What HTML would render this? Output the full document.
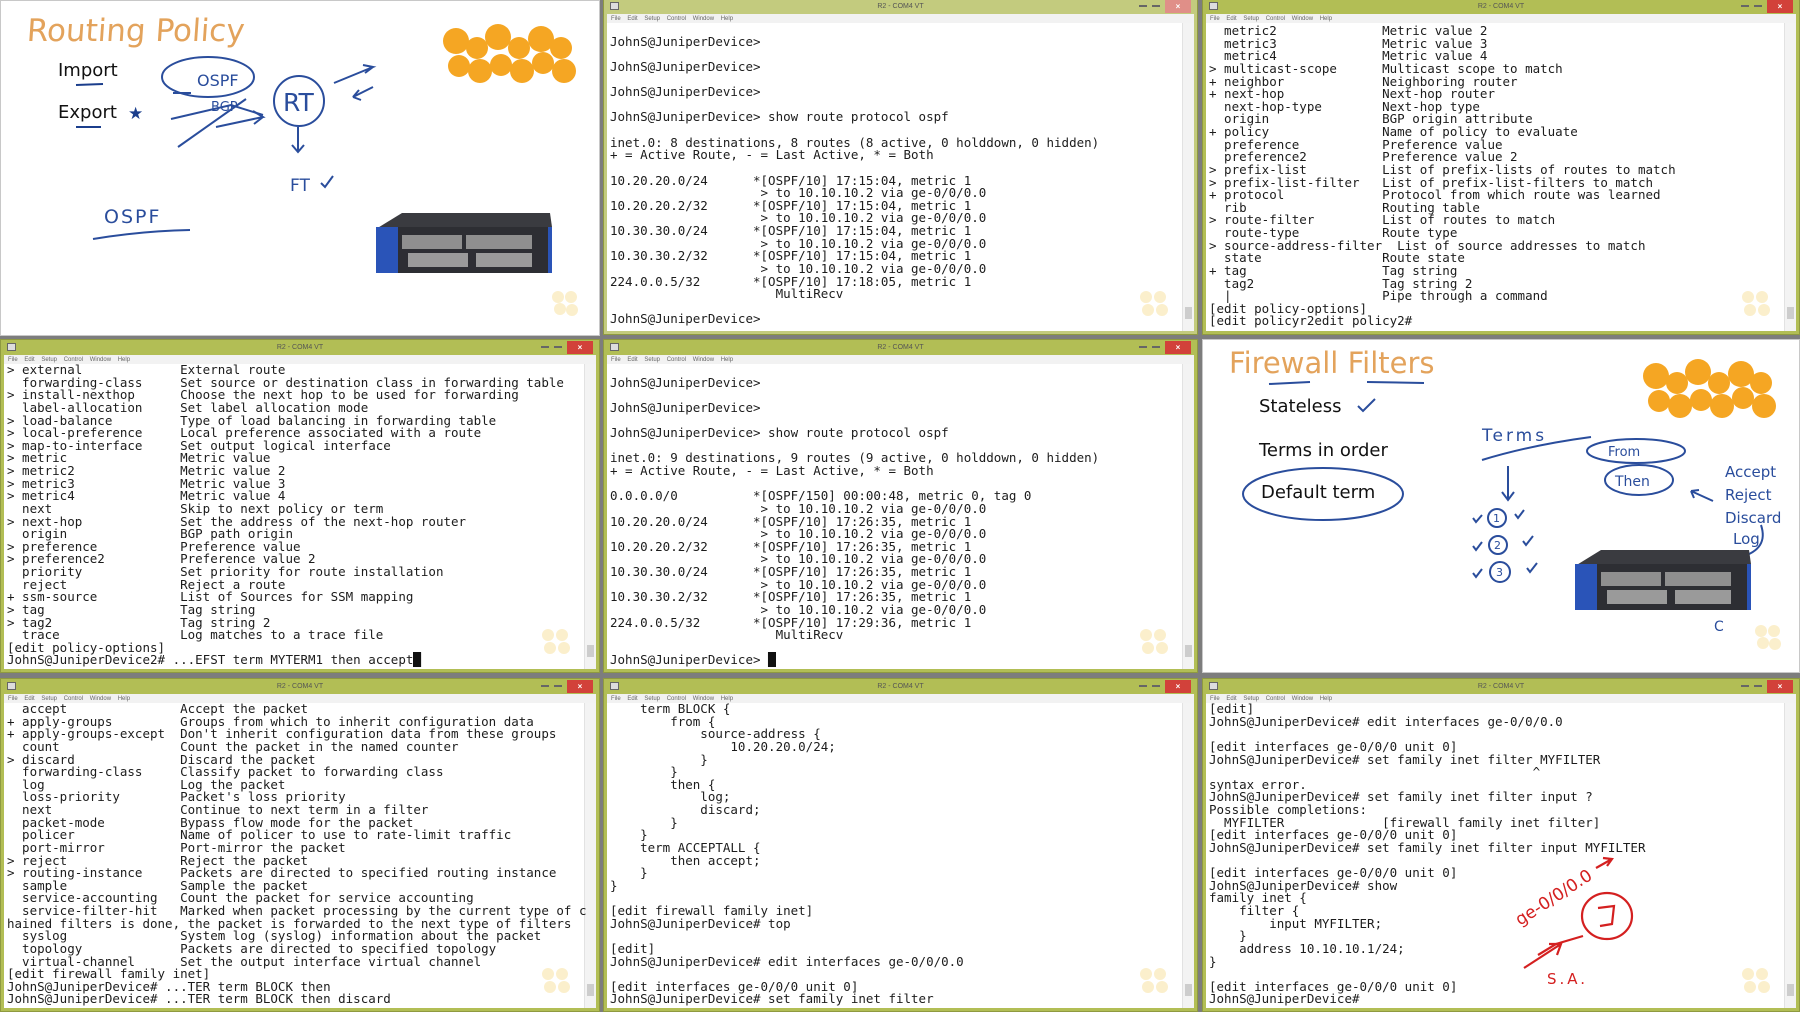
<!DOCTYPE html>
<html><head><meta charset="utf-8"><style>
*{margin:0;padding:0;box-sizing:border-box}
body{width:1800px;height:1011px;position:relative;background:#7d7d7d;overflow:hidden;font-family:"Liberation Sans",sans-serif}
.win{position:absolute;background:#b2be55;border:1px solid #8f9a40}
.win.ina{background:#c3cb7e}
.tb{position:absolute;left:0;right:0;top:0;height:15px;text-align:center;font:7px/15px "Liberation Sans",sans-serif;color:#555}
.ico{position:absolute;left:6px;top:3px;width:9px;height:8px;border:1px solid #666;background:#ddd}
.btns{position:absolute;right:6px;top:1px;height:12px}
.btns i{display:inline-block;width:8px;height:2px;background:#666;margin:5px 5px 0 0;vertical-align:top}
.btns b{display:inline-block;width:26px;height:13px;background:#d2413a;vertical-align:top;color:#fff;font:bold 8px/13px sans-serif;text-align:center}
.ina .btns b{background:#e08f88}
.menu{position:absolute;left:3px;right:3px;top:15px;height:10px;background:#f2f2f2;font:6px/10px "Liberation Sans",sans-serif;color:#666;padding-left:4px;word-spacing:5px}
.bd{position:absolute;left:3px;right:3px;top:24px;bottom:3px;background:#fff;overflow:hidden}
.sb{position:absolute;right:0;top:0;bottom:0;width:12px;background:#f3f3f3;border-left:1px solid #e2e2e2}
.sb:after{content:"";position:absolute;right:2px;bottom:12px;width:7px;height:12px;background:#cdcdcd}
pre{position:absolute;left:3px;top:0;font:12.5px/12.63px "DejaVu Sans Mono","Liberation Mono",monospace;color:#1c1c1c;white-space:pre}
.wm{position:absolute;right:24px;bottom:14px;width:30px;height:26px}
.wm span{position:absolute;width:12px;height:12px;border-radius:50%;background:#fbefcc}
.draw{position:absolute;background:#fff;border:1px solid #c8c8c8}
.cur{background:#111;color:#111}
</style></head><body>

<!-- Row1 Col1 drawing -->
<div class="draw" style="left:0;top:0;width:600px;height:336px">
<svg width="600" height="336" style="position:absolute;left:0;top:0" font-family="DejaVu Sans, sans-serif">
<text x="28" y="40" font-size="31" fill="#e3a35c" transform="skewX(-4)">Routing Policy</text>
<text x="57" y="75" font-size="18" fill="#111">Import</text>
<line x1="75" y1="84" x2="102" y2="83" stroke="#1b3e8c" stroke-width="2"/>
<text x="57" y="117" font-size="18" fill="#111">Export</text>
<line x1="75" y1="126" x2="100" y2="126" stroke="#1b3e8c" stroke-width="2"/>
<text x="127" y="118" font-size="17" fill="#1b3e8c">★</text>
<g fill="none" stroke="#2a4d9c" stroke-width="2">
<ellipse cx="207" cy="76" rx="46" ry="20"/>
<line x1="172" y1="92" x2="190" y2="92"/>
<path d="M170 118 L230 104 L262 114"/>
<path d="M177 146 L245 98"/>
<path d="M215 126 L262 116 L252 110 M262 116 L253 123"/>
<circle cx="298" cy="100" r="25"/>
<path d="M333 82 L372 66 L362 64 M372 66 L364 72"/>
<path d="M372 86 L352 96 L358 89 M352 96 L360 99"/>
<path d="M297 126 L297 150 M291 144 L297 151 L303 144"/>
<path d="M320 182 L324 186 L332 175"/>
<path d="M92 238 Q140 230 189 229"/>
</g>
<text x="196" y="85" font-size="16" fill="#2a4d9c">OSPF</text>
<text x="210" y="110" font-size="13" fill="#2a4d9c">BGP</text>
<text x="282" y="110" font-size="25" fill="#2a4d9c">RT</text>
<text x="289" y="190" font-size="17" fill="#2a4d9c">FT</text>
<text x="103" y="222" font-size="19" fill="#2a4d9c" letter-spacing="2">OSPF</text>
<g fill="#f5a623">
<circle cx="455" cy="40" r="13"/><circle cx="476" cy="47" r="11"/><circle cx="497" cy="36" r="13"/><circle cx="518" cy="47" r="11"/><circle cx="540" cy="38" r="13"/><circle cx="560" cy="47" r="11"/>
<circle cx="458" cy="65" r="11"/><circle cx="479" cy="70" r="12"/><circle cx="500" cy="64" r="11"/><circle cx="521" cy="70" r="12"/><circle cx="542" cy="62" r="11"/><circle cx="563" cy="70" r="12"/>
</g>
<g fill="#fbefcc"><circle cx="557" cy="296" r="6"/><circle cx="570" cy="296" r="6"/><circle cx="559" cy="308" r="6"/><circle cx="571" cy="309" r="6"/></g>
<g transform="translate(371,212)">
<path d="M4 16 L30 0 L178 0 L180 14 Z" fill="#3a3b40"/>
<rect x="4" y="14" width="176" height="46" fill="#2d2e33"/>
<rect x="4" y="14" width="22" height="46" fill="#2a54b8"/>
<rect x="30" y="22" width="60" height="14" fill="#8f8f8f"/><rect x="94" y="22" width="66" height="14" fill="#8f8f8f"/>
<rect x="36" y="40" width="60" height="14" fill="#9a9a9a"/><rect x="104" y="40" width="56" height="14" fill="#9a9a9a"/>
<rect x="176" y="14" width="4" height="46" fill="#2a54b8"/>
</g>
</svg>
</div>

<!-- Row1 Col2 -->
<div class="win ina" style="left:603px;top:-2px;width:595px;height:337px">
<div class="tb"><div class="ico"></div>R2 - COM4 VT<div class="btns"><i></i><i></i><b>×</b></div></div>
<div class="menu">File Edit Setup Control Window Help</div>
<div class="bd"><div class="sb"></div><div class="wm"><span style="left:0;top:0"></span><span style="left:14px;top:0"></span><span style="left:2px;top:13px"></span><span style="left:16px;top:13px"></span></div>
<pre>

JohnS@JuniperDevice>

JohnS@JuniperDevice>

JohnS@JuniperDevice>

JohnS@JuniperDevice> show route protocol ospf

inet.0: 8 destinations, 8 routes (8 active, 0 holddown, 0 hidden)
+ = Active Route, - = Last Active, * = Both

10.20.20.0/24      *[OSPF/10] 17:15:04, metric 1
                    > to 10.10.10.2 via ge-0/0/0.0
10.20.20.2/32      *[OSPF/10] 17:15:04, metric 1
                    > to 10.10.10.2 via ge-0/0/0.0
10.30.30.0/24      *[OSPF/10] 17:15:04, metric 1
                    > to 10.10.10.2 via ge-0/0/0.0
10.30.30.2/32      *[OSPF/10] 17:15:04, metric 1
                    > to 10.10.10.2 via ge-0/0/0.0
224.0.0.5/32       *[OSPF/10] 17:18:05, metric 1
                      MultiRecv

JohnS@JuniperDevice></pre></div></div>

<!-- Row1 Col3 -->
<div class="win" style="left:1202px;top:-2px;width:598px;height:337px">
<div class="tb"><div class="ico"></div>R2 - COM4 VT<div class="btns"><i></i><i></i><b>×</b></div></div>
<div class="menu">File Edit Setup Control Window Help</div>
<div class="bd"><div class="sb"></div><div class="wm"><span style="left:0;top:0"></span><span style="left:14px;top:0"></span><span style="left:2px;top:13px"></span><span style="left:16px;top:13px"></span></div>
<pre style="top:2px">  metric2              Metric value 2
  metric3              Metric value 3
  metric4              Metric value 4
> multicast-scope      Multicast scope to match
+ neighbor             Neighboring router
+ next-hop             Next-hop router
  next-hop-type        Next-hop type
  origin               BGP origin attribute
+ policy               Name of policy to evaluate
  preference           Preference value
  preference2          Preference value 2
> prefix-list          List of prefix-lists of routes to match
> prefix-list-filter   List of prefix-list-filters to match
+ protocol             Protocol from which route was learned
  rib                  Routing table
> route-filter         List of routes to match
  route-type           Route type
> source-address-filter  List of source addresses to match
  state                Route state
+ tag                  Tag string
  tag2                 Tag string 2
  |                    Pipe through a command
[edit policy-options]
[edit policyr2edit policy2#</pre></div></div>

<!-- Row2 Col1 -->
<div class="win" style="left:0;top:339px;width:600px;height:334px">
<div class="tb"><div class="ico"></div>R2 - COM4 VT<div class="btns"><i></i><i></i><b>×</b></div></div>
<div class="menu">File Edit Setup Control Window Help</div>
<div class="bd"><div class="sb"></div><div class="wm"><span style="left:0;top:0"></span><span style="left:14px;top:0"></span><span style="left:2px;top:13px"></span><span style="left:16px;top:13px"></span></div>
<pre>> external             External route
  forwarding-class     Set source or destination class in forwarding table
> install-nexthop      Choose the next hop to be used for forwarding
  label-allocation     Set label allocation mode
> load-balance         Type of load balancing in forwarding table
> local-preference     Local preference associated with a route
> map-to-interface     Set output logical interface
> metric               Metric value
> metric2              Metric value 2
> metric3              Metric value 3
> metric4              Metric value 4
  next                 Skip to next policy or term
> next-hop             Set the address of the next-hop router
  origin               BGP path origin
> preference           Preference value
> preference2          Preference value 2
  priority             Set priority for route installation
  reject               Reject a route
+ ssm-source           List of Sources for SSM mapping
> tag                  Tag string
> tag2                 Tag string 2
  trace                Log matches to a trace file
[edit policy-options]
JohnS@JuniperDevice2# ...EFST term MYTERM1 then accept<span class="cur">█</span></pre></div></div>

<!-- Row2 Col2 -->
<div class="win" style="left:603px;top:339px;width:595px;height:334px">
<div class="tb"><div class="ico"></div>R2 - COM4 VT<div class="btns"><i></i><i></i><b>×</b></div></div>
<div class="menu">File Edit Setup Control Window Help</div>
<div class="bd"><div class="sb"></div><div class="wm"><span style="left:0;top:0"></span><span style="left:14px;top:0"></span><span style="left:2px;top:13px"></span><span style="left:16px;top:13px"></span></div>
<pre>

JohnS@JuniperDevice>

JohnS@JuniperDevice>

JohnS@JuniperDevice> show route protocol ospf

inet.0: 9 destinations, 9 routes (9 active, 0 holddown, 0 hidden)
+ = Active Route, - = Last Active, * = Both

0.0.0.0/0          *[OSPF/150] 00:00:48, metric 0, tag 0
                    > to 10.10.10.2 via ge-0/0/0.0
10.20.20.0/24      *[OSPF/10] 17:26:35, metric 1
                    > to 10.10.10.2 via ge-0/0/0.0
10.20.20.2/32      *[OSPF/10] 17:26:35, metric 1
                    > to 10.10.10.2 via ge-0/0/0.0
10.30.30.0/24      *[OSPF/10] 17:26:35, metric 1
                    > to 10.10.10.2 via ge-0/0/0.0
10.30.30.2/32      *[OSPF/10] 17:26:35, metric 1
                    > to 10.10.10.2 via ge-0/0/0.0
224.0.0.5/32       *[OSPF/10] 17:29:36, metric 1
                      MultiRecv

JohnS@JuniperDevice> <span class="cur">█</span></pre></div></div>

<!-- Row2 Col3 drawing -->
<div class="draw" style="left:1202px;top:339px;width:598px;height:334px">
<svg width="598" height="334" style="position:absolute;left:0;top:0" font-family="DejaVu Sans, sans-serif">
<g transform="translate(-1202,-339)">
<text x="1228" y="372" font-size="29" fill="#e3a35c">Firewall Filters</text>
<g fill="none" stroke="#2a4d9c" stroke-width="2">
<line x1="1268" y1="383" x2="1309" y2="381"/><line x1="1366" y1="381" x2="1423" y2="382"/>
<path d="M1357 405 L1362 410 L1374 398"/>
<ellipse cx="1322" cy="493" rx="80" ry="26"/>
<path d="M1481 459 Q1530 444 1590 436"/>
<ellipse cx="1635" cy="450" rx="49" ry="12"/>
<ellipse cx="1638" cy="479" rx="34" ry="15"/>
<path d="M1507 465 L1507 498 M1501 491 L1507 499 L1513 491"/>
<circle cx="1496" cy="517" r="9"/><circle cx="1497" cy="544" r="9"/><circle cx="1499" cy="571" r="10"/>
<path d="M1472 517 l3 4 l6 -7 M1514 513 l3 4 l6 -8 M1472 545 l3 4 l6 -8 M1522 540 l3 4 l7 -9 M1472 572 l3 4 l6 -8 M1526 567 l3 4 l7 -9"/>
<path d="M1712 500 L1690 490 M1690 490 L1698 489 M1690 490 L1693 497"/>
<path d="M1760 524 Q1768 548 1740 556"/>
</g>
<text x="1258" y="411" font-size="18" fill="#111">Stateless</text>
<text x="1258" y="455" font-size="18" fill="#111">Terms in order</text>
<text x="1260" y="497" font-size="18" fill="#111">Default term</text>
<text x="1481" y="440" font-size="17" fill="#2a4d9c" letter-spacing="3">Terms</text>
<text x="1607" y="455" font-size="13" fill="#2a4d9c">From</text>
<text x="1614" y="485" font-size="14" fill="#2a4d9c">Then</text>
<text x="1492" y="521" font-size="11" fill="#2a4d9c">1</text><text x="1493" y="548" font-size="11" fill="#2a4d9c">2</text><text x="1495" y="575" font-size="11" fill="#2a4d9c">3</text>
<text x="1724" y="476" font-size="15" fill="#2a4d9c">Accept</text>
<text x="1724" y="499" font-size="15" fill="#2a4d9c">Reject</text>
<text x="1724" y="522" font-size="15" fill="#2a4d9c">Discard</text>
<text x="1732" y="543" font-size="15" fill="#2a4d9c">Log</text>
<text x="1713" y="630" font-size="14" fill="#2a4d9c">C</text>
<g fill="#f5a623">
<circle cx="1655" cy="375" r="13"/><circle cx="1676" cy="382" r="11"/><circle cx="1697" cy="371" r="13"/><circle cx="1718" cy="382" r="11"/><circle cx="1740" cy="373" r="13"/><circle cx="1760" cy="382" r="11"/>
<circle cx="1658" cy="400" r="11"/><circle cx="1679" cy="405" r="12"/><circle cx="1700" cy="399" r="11"/><circle cx="1721" cy="405" r="12"/><circle cx="1742" cy="397" r="11"/><circle cx="1763" cy="405" r="12"/>
</g>
<g fill="#fbefcc"><circle cx="1760" cy="630" r="6"/><circle cx="1773" cy="630" r="6"/><circle cx="1762" cy="642" r="6"/><circle cx="1774" cy="643" r="6"/></g>
<g transform="translate(1570,549)">
<path d="M4 16 L30 0 L178 0 L180 14 Z" fill="#3a3b40"/>
<rect x="4" y="14" width="176" height="46" fill="#2d2e33"/>
<rect x="4" y="14" width="22" height="46" fill="#2a54b8"/>
<rect x="30" y="22" width="60" height="14" fill="#8f8f8f"/><rect x="94" y="22" width="66" height="14" fill="#8f8f8f"/>
<rect x="36" y="40" width="60" height="14" fill="#9a9a9a"/><rect x="104" y="40" width="56" height="14" fill="#9a9a9a"/>
<rect x="176" y="14" width="4" height="46" fill="#2a54b8"/>
</g>
</g>
</svg>
</div>

<!-- Row3 Col1 -->
<div class="win" style="left:0;top:678px;width:600px;height:334px">
<div class="tb"><div class="ico"></div>R2 - COM4 VT<div class="btns"><i></i><i></i><b>×</b></div></div>
<div class="menu">File Edit Setup Control Window Help</div>
<div class="bd"><div class="sb"></div><div class="wm"><span style="left:0;top:0"></span><span style="left:14px;top:0"></span><span style="left:2px;top:13px"></span><span style="left:16px;top:13px"></span></div>
<pre>  accept               Accept the packet
+ apply-groups         Groups from which to inherit configuration data
+ apply-groups-except  Don't inherit configuration data from these groups
  count                Count the packet in the named counter
> discard              Discard the packet
  forwarding-class     Classify packet to forwarding class
  log                  Log the packet
  loss-priority        Packet's loss priority
  next                 Continue to next term in a filter
  packet-mode          Bypass flow mode for the packet
  policer              Name of policer to use to rate-limit traffic
  port-mirror          Port-mirror the packet
> reject               Reject the packet
> routing-instance     Packets are directed to specified routing instance
  sample               Sample the packet
  service-accounting   Count the packet for service accounting
  service-filter-hit   Marked when packet processing by the current type of c
hained filters is done, the packet is forwarded to the next type of filters
  syslog               System log (syslog) information about the packet
  topology             Packets are directed to specified topology
  virtual-channel      Set the output interface virtual channel
[edit firewall family inet]
JohnS@JuniperDevice# ...TER term BLOCK then
JohnS@JuniperDevice# ...TER term BLOCK then discard</pre></div></div>

<!-- Row3 Col2 -->
<div class="win" style="left:603px;top:678px;width:595px;height:334px">
<div class="tb"><div class="ico"></div>R2 - COM4 VT<div class="btns"><i></i><i></i><b>×</b></div></div>
<div class="menu">File Edit Setup Control Window Help</div>
<div class="bd"><div class="sb"></div><div class="wm"><span style="left:0;top:0"></span><span style="left:14px;top:0"></span><span style="left:2px;top:13px"></span><span style="left:16px;top:13px"></span></div>
<pre>    term BLOCK {
        from {
            source-address {
                10.20.20.0/24;
            }
        }
        then {
            log;
            discard;
        }
    }
    term ACCEPTALL {
        then accept;
    }
}

[edit firewall family inet]
JohnS@JuniperDevice# top

[edit]
JohnS@JuniperDevice# edit interfaces ge-0/0/0.0

[edit interfaces ge-0/0/0 unit 0]
JohnS@JuniperDevice# set family inet filter</pre></div></div>

<!-- Row3 Col3 -->
<div class="win" style="left:1202px;top:678px;width:598px;height:334px">
<div class="tb"><div class="ico"></div>R2 - COM4 VT<div class="btns"><i></i><i></i><b>×</b></div></div>
<div class="menu">File Edit Setup Control Window Help</div>
<div class="bd"><div class="sb"></div><div class="wm"><span style="left:0;top:0"></span><span style="left:14px;top:0"></span><span style="left:2px;top:13px"></span><span style="left:16px;top:13px"></span></div>
<pre>[edit]
JohnS@JuniperDevice# edit interfaces ge-0/0/0.0

[edit interfaces ge-0/0/0 unit 0]
JohnS@JuniperDevice# set family inet filter MYFILTER
                                           ^
syntax error.
JohnS@JuniperDevice# set family inet filter input ?
Possible completions:
  MYFILTER             [firewall family inet filter]
[edit interfaces ge-0/0/0 unit 0]
JohnS@JuniperDevice# set family inet filter input MYFILTER

[edit interfaces ge-0/0/0 unit 0]
JohnS@JuniperDevice# show
family inet {
    filter {
        input MYFILTER;
    }
    address 10.10.10.1/24;
}

[edit interfaces ge-0/0/0 unit 0]
JohnS@JuniperDevice#</pre></div></div>

<!-- red annotations -->
<svg width="1800" height="1011" style="position:absolute;left:0;top:0" font-family="DejaVu Sans, sans-serif">
<g fill="none" stroke="#d42020" stroke-width="2.2">
<ellipse cx="1607" cy="916" rx="25" ry="23"/>
<path d="M1598 908 L1614 906 L1612 924 L1600 926"/>
<path d="M1538 955 L1556 944 L1583 936"/>
<path d="M1524 968 L1561 944 M1549 944 L1561 944 L1557 955"/>
<path d="M1596 868 L1612 859 M1603 858 L1612 859 L1607 866"/>
</g>
<text x="1520" y="926" font-size="17" fill="#d42020" transform="rotate(-33 1520 926)">ge-0/0/0.0</text>
<text x="1547" y="984" font-size="15" fill="#d42020" letter-spacing="3">S.A.</text>
</svg>
</body></html>
